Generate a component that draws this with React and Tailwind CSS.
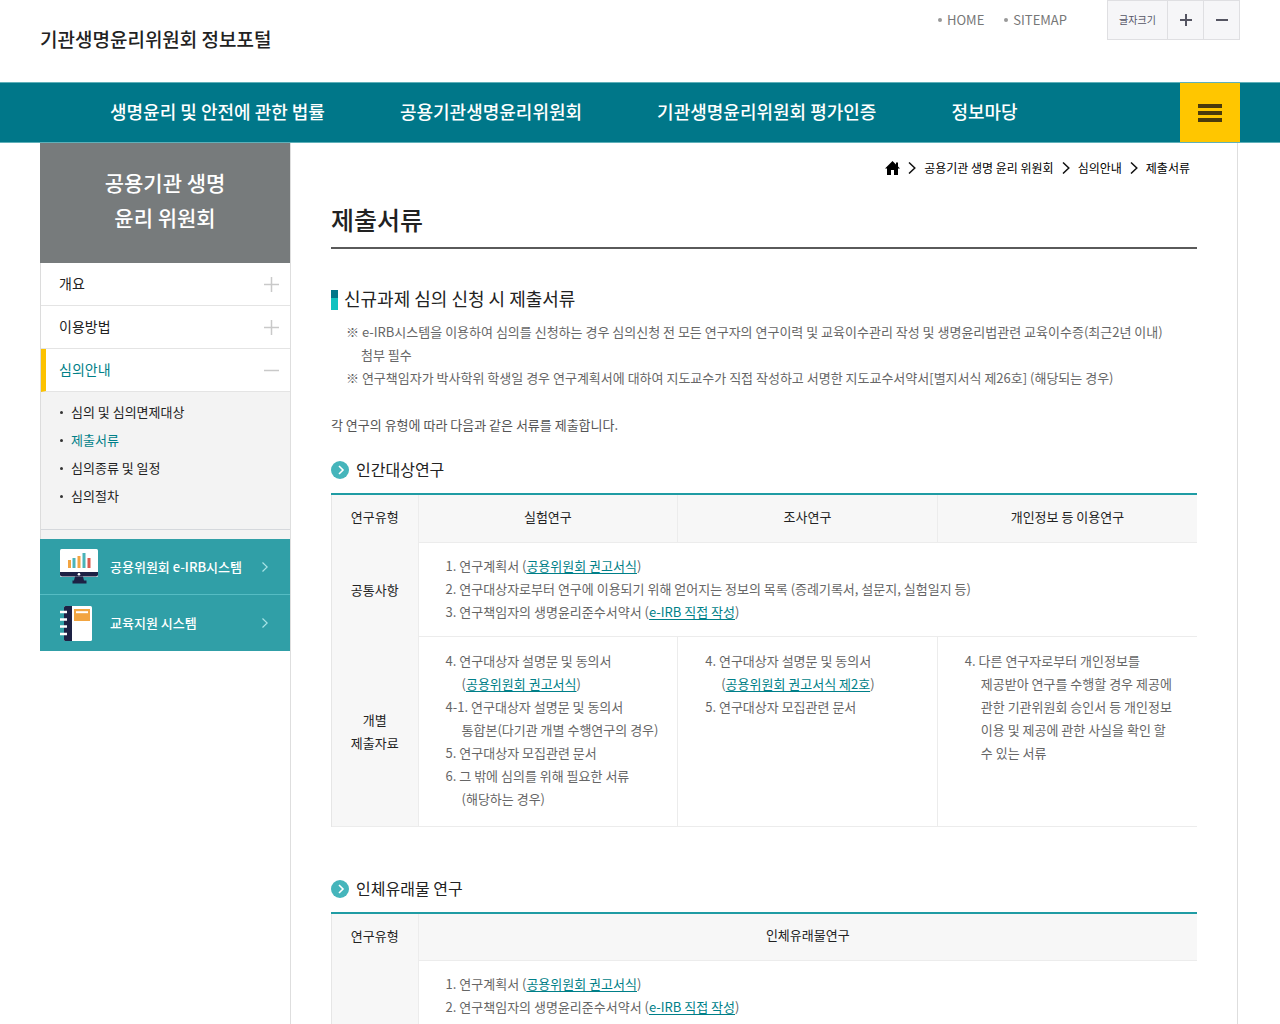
import { useState } from 'react'

const NAV_ITEMS = [
    '생명윤리 및 안전에 관한 법률',
    '공용기관생명윤리위원회',
    '기관생명윤리위원회 평가인증',
    '정보마당',
]

const SUB_MENU = ['심의 및 심의면제대상', '제출서류', '심의종류 및 일정', '심의절차']

function DocLink({ children }) {
    return (
        <a href="#" className="text-[#007f88] underline underline-offset-2">
            {children}
        </a>
    )
}

function HomeIcon() {
    return (
        <svg className="w-[15px] h-[14px]" viewBox="0 0 15 14" fill="#000">
            <path d="M7.500 0 0 7.500h2V14h4V9h3v5h4V7.500h2l-2-2V1.500h-2v2z" />
        </svg>
    )
}

function CrumbArrow() {
    return (
        <svg className="w-2 h-3" viewBox="0 0 8 12" fill="none" stroke="#111" strokeWidth="1.5">
            <path d="M1 .5 6.8 6 1 11.5" />
        </svg>
    )
}

function MonitorIcon() {
    return (
        <svg className="w-[38px] h-[36px]" viewBox="0 0 38 36">
            <rect width="38" height="28" rx="1.5" fill="#fff" />
            <path d="M0 23h38v2.5a2 2 0 0 1-2 2H2a2 2 0 0 1-2-2z" fill="#1d2144" />
            <path d="M15 27.500h8l1 4h2.500v3h-14v-3H14z" fill="#1d2144" />
            <circle cx="19" cy="25.300" r="1.300" fill="#fff" />
            <rect x="8" y="11" width="3" height="8" fill="#f2a541" />
            <rect x="12.500" y="9" width="3" height="10" fill="#4bb3b8" />
            <rect x="17.500" y="7" width="3" height="12" fill="#f2a541" />
            <rect x="22.500" y="4" width="3" height="15" fill="#4bb3b8" />
            <rect x="27.500" y="9" width="3" height="10" fill="#d95b4f" />
        </svg>
    )
}

function NotebookIcon() {
    return (
        <svg className="w-8 h-[35px]" viewBox="0 0 32 35">
            <rect x="4" width="28" height="35" rx="1.500" fill="#fff" />
            <path d="M5.500 0H12v35H5.500A1.500 1.500 0 0 1 4 33.500v-32A1.500 1.500 0 0 1 5.500 0z" fill="#1d2144" />
            <path d="M0 6h7M0 13.500h7M0 20.500h7M0 28h7" stroke="#fff" strokeWidth="2.500" />
            <rect x="14" y="3" width="16" height="12" fill="#f2a541" />
            <path d="M16 6.200h12" stroke="#fff" strokeWidth="2" />
        </svg>
    )
}

function QuickLink({ icon, label }) {
    return (
        <a href="#" className="flex items-center h-14 pl-5 pr-[22px] text-[13px] font-medium text-white">
            <span className="w-[50px]">{icon}</span>
            <span className="flex-1">{label}</span>
            <svg className="w-[6px] h-[10px]" viewBox="0 0 6 10" fill="none" stroke="#a9e4e6" strokeWidth="1.200">
                <path d="M.5.5 5.200 5 .5 9.500" />
            </svg>
        </a>
    )
}

function SectionTitle({ children }) {
    return (
        <h3 className="flex items-center gap-[7px] h-6 text-base text-[#222]">
            <svg className="w-[18px] h-[18px] mt-[2px]" viewBox="0 0 18 18">
                <circle cx="9" cy="9" r="9" fill="#45b5bb" />
                <path d="M8 5l4 4-4 4" fill="none" stroke="#fff" strokeWidth="1.600" />
            </svg>
            {children}
        </h3>
    )
}

function SideMenu() {
    const [open, setOpen] = useState('심의안내')

    return (
        <aside className="w-[250px] shrink-0">
            <h2 className="flex items-center justify-center h-[120px] pb-[6px] bg-[#777b7c] text-center text-[21px] leading-[35px] font-medium text-white">
                공용기관 생명
                <br />
                윤리 위원회
            </h2>
            <div className="border-l border-[#dcdcdc]">
                {['개요', '이용방법', '심의안내'].map((name) => {
                    const active = name === open
                    return (
                        <button
                            key={name}
                            type="button"
                            onClick={() => setOpen(name)}
                            className={
                                'flex items-center justify-between w-full h-[43px] pr-[11px] border-b border-b-[#e4e4e4] text-sm ' +
                                (active
                                    ? 'border-l-[5px] border-l-[#fcc200] pl-[13px] text-[#007f88]'
                                    : 'pl-[18px] text-[#222]')
                            }
                        >
                            <span className="pb-[2px]">{name}</span>
                            <svg className="w-[15px] h-[15px]" viewBox="0 0 15 15" stroke="#c9c9c9" strokeWidth="1.500">
                                <path d={active ? 'M0 7.500h15' : 'M0 7.500h15M7.500 0v15'} />
                            </svg>
                        </button>
                    )
                })}
                <ul className="h-[137px] pt-[6px] pl-[19px] bg-[#f3f3f3] text-[13px] leading-7 text-[#222]">
                    {SUB_MENU.map((item) => (
                        <li key={item} className="flex items-center gap-2">
                            <span className="w-[3px] h-[3px] rounded-full bg-[#333]" />
                            <a href="#" className={item === '제출서류' ? 'text-[#007f88]' : ''}>
                                {item}
                            </a>
                        </li>
                    ))}
                </ul>
                <div className="h-[10px] border-t border-[#d5d8dc] bg-[#f3f3f3]" />
            </div>
            <div className="bg-[#309fa7] divide-y divide-[#55bcc3]">
                <QuickLink icon={<MonitorIcon />} label="공용위원회 e-IRB시스템" />
                <QuickLink icon={<NotebookIcon />} label="교육지원 시스템" />
            </div>
        </aside>
    )
}

const tableClass =
    'w-full mt-3 table-fixed border-collapse border-t-2 border-t-[#1f9ca4] border-b border-b-[#ececec] text-[13px] leading-[23px] text-[#666]'
const sideHead = 'w-[10%] bg-[#f7f7f7] border-l border-[#e6e6e6] font-normal text-[#222]'
const colHead = 'h-12 pb-1 bg-[#f7f7f7] border-l border-b border-[#ececec] font-normal text-[#222]'
const cell = 'pl-[27px] pr-[18px] border-l border-b border-[#ececec] align-top'

export default function App() {
    return (
        <div className="min-h-screen bg-white font-['Noto_Sans_CJK_KR',sans-serif] break-keep">
            <header className="flex items-start justify-between h-[82px] px-10">
                <a href="#" className="pt-[25px] text-[19px] leading-7 font-medium text-[#222]">
                    기관생명윤리위원회 정보포털
                </a>
                <div className="flex items-center text-[13px] text-[#777]">
                    <a href="#" className="flex items-center gap-[5px] mr-5">
                        <span className="w-1 h-1 rounded-full bg-[#999]" />
                        HOME
                    </a>
                    <a href="#" className="flex items-center gap-[5px] mr-10">
                        <span className="w-1 h-1 rounded-full bg-[#999]" />
                        SITEMAP
                    </a>
                    <div className="flex items-center h-10 border border-[#dfdfe2] bg-[#f6f6f8] divide-x divide-[#dfdfe2]">
                        <span className="w-[60px] text-center text-[10px] leading-[38px] text-[#556]">글자크기</span>
                        <button type="button" aria-label="글자 크게" className="flex items-center justify-center w-9 h-full">
                            <svg className="w-3 h-3" viewBox="0 0 12 12" stroke="#555562" strokeWidth="2">
                                <path d="M0 6h12M6 0v12" />
                            </svg>
                        </button>
                        <button type="button" aria-label="글자 작게" className="flex items-center justify-center w-[35px] h-full">
                            <svg className="w-3 h-3" viewBox="0 0 12 12" stroke="#555562" strokeWidth="2">
                                <path d="M0 6h12" />
                            </svg>
                        </button>
                    </div>
                </div>
            </header>

            <nav className="flex items-center h-[61px] px-10 border-y border-[#5fb0b9] bg-[#007789]">
                <ul className="flex flex-1 gap-[75px] pl-[70px] pb-1 text-lg font-medium text-white">
                    {NAV_ITEMS.map((item) => (
                        <li key={item}>
                            <a href="#">{item}</a>
                        </li>
                    ))}
                </ul>
                <button type="button" aria-label="전체메뉴" className="flex items-center justify-center w-[60px] h-full bg-[#ffc600]">
                    <svg className="w-6 h-[18px]" viewBox="0 0 24 18" fill="#4a3a0c">
                        <path d="M0 0h24v4H0zM0 7h24v4H0zM0 14h24v4H0z" />
                    </svg>
                </button>
            </nav>

            <div className="flex pl-10 pr-[42px]">
                <SideMenu />

                <main className="flex-1 min-w-0 px-10 pb-20 border-x border-[#dedede]">
                    <div className="flex items-center justify-end gap-2 h-[50px] pr-[7px] text-xs text-black">
                        <a href="#" aria-label="홈">
                            <HomeIcon />
                        </a>
                        <CrumbArrow />
                        <a href="#">공용기관 생명 윤리 위원회</a>
                        <CrumbArrow />
                        <a href="#">심의안내</a>
                        <CrumbArrow />
                        <span>제출서류</span>
                    </div>

                    <h1 className="h-14 pt-2 border-b-2 border-[#5a5a5a] text-[25px] leading-9 font-medium text-[#222]">
                        제출서류
                    </h1>

                    <h2 className="flex items-center gap-[6px] mt-9 h-7 pb-[2px] text-lg text-[#222]">
                        <span className="w-[7px] h-5 mt-1 border-t-8 border-[#007789] bg-[#0fc2c0]" />
                        신규과제 심의 신청 시 제출서류
                    </h2>
                    <ul className="mt-[7px] pl-[30px] pr-3 text-[13px] leading-[23px] text-[#666]">
                        <li className="-indent-[15px]">
                            ※ e-IRB시스템을 이용하여 심의를 신청하는 경우 심의신청 전 모든 연구자의 연구이력 및 교육이수관리 작성 및 생명윤리법관련
                            교육이수증(최근2년 이내) 첨부 필수
                        </li>
                        <li className="-indent-[15px]">
                            ※ 연구책임자가 박사학위 학생일 경우 연구계획서에 대하여 지도교수가 직접 작성하고 서명한 지도교수서약서[별지서식 제26호]
                            (해당되는 경우)
                        </li>
                    </ul>
                    <p className="mt-6 mb-[21px] text-[13px] leading-[23px] text-[#555]">
                        각 연구의 유형에 따라 다음과 같은 서류를 제출합니다.
                    </p>

                    <SectionTitle>인간대상연구</SectionTitle>
                    <table className={tableClass}>
                        <thead>
                            <tr>
                                <th scope="col" className={sideHead + ' pb-1'}>연구유형</th>
                                <th scope="col" className={colHead}>실험연구</th>
                                <th scope="col" className={colHead}>조사연구</th>
                                <th scope="col" className={colHead}>개인정보 등 이용연구</th>
                            </tr>
                        </thead>
                        <tbody>
                            <tr>
                                <th scope="row" className={sideHead}>공통사항</th>
                                <td colSpan={3} className={cell + ' pt-[11px] pb-[13px]'}>
                                    <p>1. 연구계획서 (<DocLink>공용위원회 권고서식</DocLink>)</p>
                                    <p>2. 연구대상자로부터 연구에 이용되기 위해 얻어지는 정보의 목록 (증례기록서, 설문지, 실험일지 등)</p>
                                    <p>3. 연구책임자의 생명윤리준수서약서 (<DocLink>e-IRB 직접 작성</DocLink>)</p>
                                </td>
                            </tr>
                            <tr>
                                <th scope="row" className={sideHead}>
                                    개별
                                    <br />
                                    제출자료
                                </th>
                                <td className={cell + ' pt-3 pb-4'}>
                                    <p>4. 연구대상자 설명문 및 동의서</p>
                                    <p className="pl-4">(<DocLink>공용위원회 권고서식</DocLink>)</p>
                                    <p>4-1. 연구대상자 설명문 및 동의서</p>
                                    <p className="pl-4">통합본(다기관 개별 수행연구의 경우)</p>
                                    <p>5. 연구대상자 모집관련 문서</p>
                                    <p>6. 그 밖에 심의를 위해 필요한 서류</p>
                                    <p className="pl-4">(해당하는 경우)</p>
                                </td>
                                <td className={cell + ' pt-3 pb-4'}>
                                    <p>4. 연구대상자 설명문 및 동의서</p>
                                    <p className="pl-4">(<DocLink>공용위원회 권고서식 제2호</DocLink>)</p>
                                    <p>5. 연구대상자 모집관련 문서</p>
                                </td>
                                <td className={cell + ' pt-3 pb-4'}>
                                    <p className="pl-4 -indent-4">
                                        4. 다른 연구자로부터 개인정보를 제공받아 연구를 수행할 경우 제공에 관한 기관위원회 승인서 등 개인정보 이용 및
                                        제공에 관한 사실을 확인 할 수 있는 서류
                                    </p>
                                </td>
                            </tr>
                        </tbody>
                    </table>

                    <div className="mt-[49px]">
                        <SectionTitle>인체유래물 연구</SectionTitle>
                    </div>
                    <table className={tableClass}>
                        <thead>
                            <tr>
                                <th scope="col" className={sideHead + ' pb-1'}>연구유형</th>
                                <th scope="col" className={colHead}>인체유래물연구</th>
                            </tr>
                        </thead>
                        <tbody>
                            <tr>
                                <th scope="row" className={sideHead} />
                                <td className={cell + ' pt-[11px] pb-[13px]'}>
                                    <p>1. 연구계획서 (<DocLink>공용위원회 권고서식</DocLink>)</p>
                                    <p>2. 연구책임자의 생명윤리준수서약서 (<DocLink>e-IRB 직접 작성</DocLink>)</p>
                                </td>
                            </tr>
                        </tbody>
                    </table>
                </main>
            </div>
        </div>
    )
}
